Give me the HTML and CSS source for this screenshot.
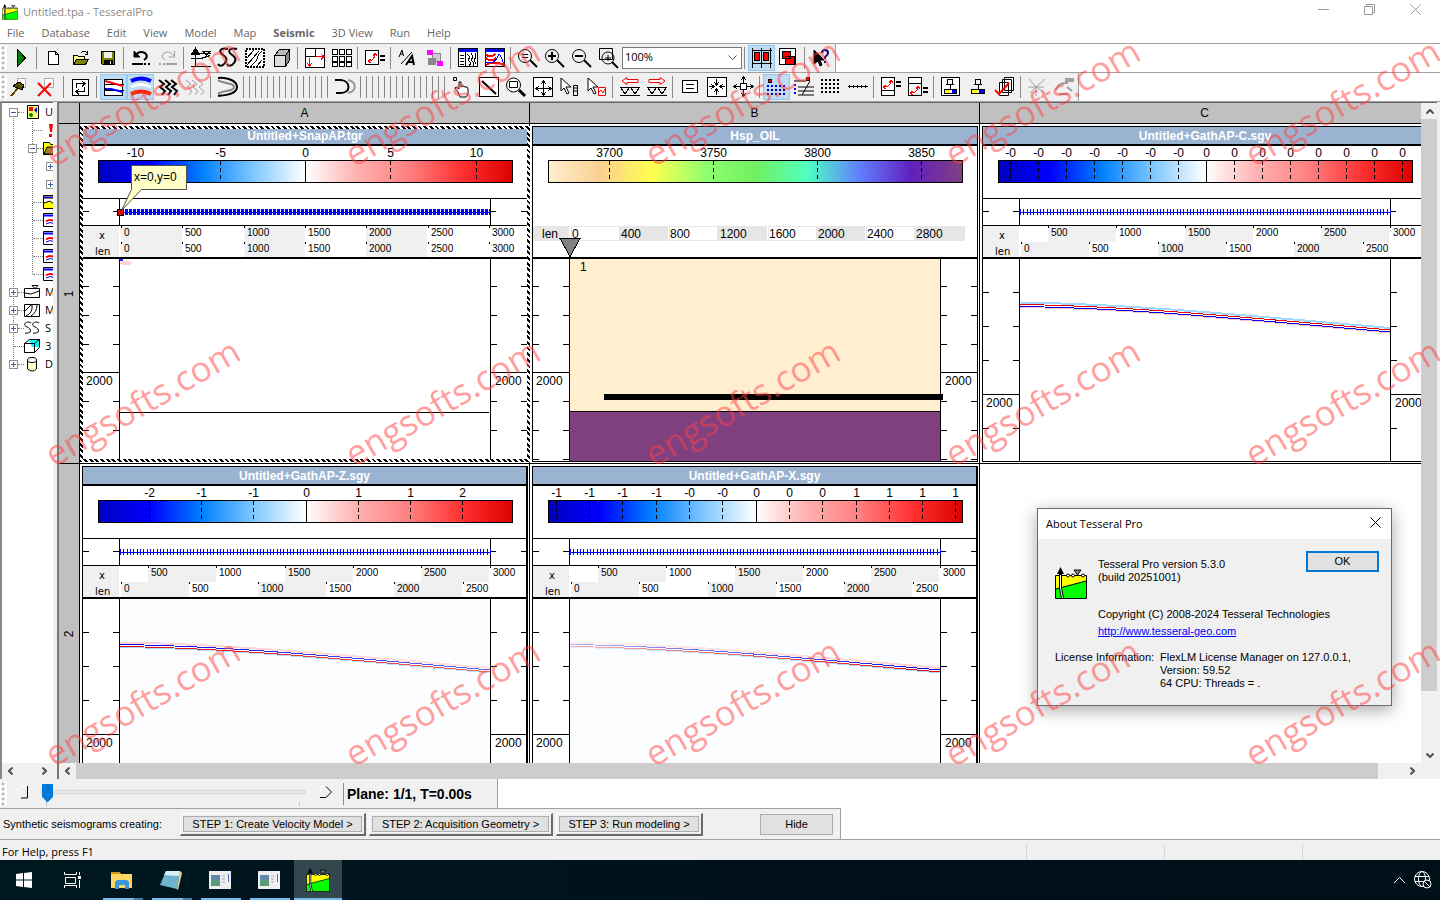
FILE: index.html
```html
<!DOCTYPE html>
<html lang="en">
<head>
    <meta charset="UTF-8">
    <meta name="viewport" content="width=device-width, initial-scale=1.0">
    <title>Untitled.tpa - TesseralPro</title>
    <link rel="stylesheet" href="styles.css">
</head>
<body>
<svg class="defs" width="0" height="0">
    <symbol id="logo" viewBox="0 0 32 32">
        <path d="M1 9h30v22H1z" fill="#ff0"/>
        <path d="M1 22L31 14v17H1z" fill="#0f0"/>
        <path d="M.5 8.500h31v23H.5zM1 22L31 14" fill="none" stroke="#000"/>
        <path d="M5.500 7v14l2 10" fill="none" stroke="#000" stroke-width="3"/>
        <path d="M5.500 8v13l2 10" fill="none" stroke="#fff"/>
        <path d="M5.500 0l3.500 7H2z" fill="#000"/>
        <path d="M19 3h7l-3.500 5z" fill="#888" stroke="#000"/>
        <g fill="#fff" stroke="#000"><circle cx="13" cy="8.500" r="1.500"/><circle cx="18" cy="8.500" r="1.500"/><circle cx="28" cy="8.500" r="1.500"/></g>
    </symbol>
    <symbol id="win" viewBox="0 0 16 16">
        <path d="M.5 1.500h15v13H.5z" fill="#fff" stroke="#000"/>
        <path d="M1 3.500h14" stroke="#00f" stroke-width="2"/>
        <path d="M3 9.500q4-3 9 0" fill="none" stroke="#f00" stroke-width="2"/>
        <path d="M3 12q4-3 9 0" fill="none" stroke="#00f"/>
    </symbol>
</svg>

<div class="app">
    <header class="titlebar">
        <svg class="logo" width="16" height="16"><use href="#logo"/></svg>
        <h1>Untitled.tpa - TesseralPro</h1>
        <button class="winbtn" aria-label="Minimize"><svg width="11" height="11"><path d="M0 5.500h11"/></svg></button>
        <button class="winbtn" aria-label="Restore"><svg width="11" height="11"><path d="M.5 2.500h8v8h-8zM2.500 2.500v-2h8v8h-2"/></svg></button>
        <button class="winbtn" aria-label="Close"><svg width="11" height="11"><path d="M.5 .5l10 10M10.500 .5l-10 10"/></svg></button>
    </header>

    <nav class="menu">
        <button>File</button><button>Database</button><button>Edit</button><button>View</button><button>Model</button><button>Map</button><button class="bold">Seismic</button><button>3D View</button><button>Run</button><button>Help</button>
    </nav>

    <div class="toolrow">
        <div class="toolbar">
            <i class="grip"></i>
            <button class="tb" aria-label="Run"><svg><path d="M6.500 1.500l8 8.500-8 8.500z" fill="#008000"/></svg></button>
            <i class="sep"></i>
            <button class="tb" aria-label="New"><svg><path d="M4.500 3.500h7l3 3v10h-10zM11.500 3.500v3h3" fill="#fff"/></svg></button>
            <button class="tb" aria-label="Open"><svg><path d="M2.500 16V7.500h4l1 1h6v3" fill="#ff8"/><path d="M2.500 16.500l3-5h12l-3 5z" fill="#808000"/><path d="M10 5q3-3 6 0M16.500 3v3h-3"/></svg></button>
            <button class="tb" aria-label="Save"><svg><path d="M3.500 3.500h13v13h-12l-1-1z" fill="#808000"/><path d="M6 4h8v6H6z" fill="#f0f0f0" stroke="none"/><path d="M6 12h8v4H6z" fill="#000"/><path d="M12.500 13v3" stroke="#fff"/></svg></button>
            <i class="sep"></i>
            <button class="tb" aria-label="Undo"><svg class="aa"><path d="M4 8q4-6 10-3 4 4-1 7" stroke-width="2"/><path d="M3 3v6h6z" fill="#000"/><path d="M1 16h11M13 16h2M17 16h2" stroke-width="2"/></svg></button>
            <button class="tb" aria-label="Redo"><svg class="aa dim"><path d="M16 8q-4-6-10-3-4 4 1 7M16.500 3v6h-6"/><path d="M1 16h2M5 16h2M8 16h11" stroke-width="2"/></svg></button>
            <i class="sep"></i>
            <button class="tb" aria-label="Velocity model"><svg><path d="M0 5.500h20M4.500 2v17M0 10.500h10l9-3M0 18.500h20M12 3.500h7l-3.500 3.500z"/><path d="M1 6l3.500-6L8 6z" fill="#000"/></svg></button>
            <button class="tb" aria-label="Seismograms"><svg class="aa"><path d="M10 1C3-1 0 3 4 6s6 5 3 9-6 3-7 1M19 1c-7-2-10 2-6 5s6 5 3 9-6 3-7 1" stroke-width="2"/></svg></button>
            <button class="tb" aria-label="Section"><svg><path d="M1 1h18v18H1z" stroke-width="2" stroke-dasharray="2 1" fill="#fff"/><path d="M2 10l7-8M2 17L14 3M6 18l5-5 3-7 3-3M12 18l5-6"/></svg></button>
            <button class="tb" aria-label="3D model"><svg><path d="M2.500 7.500h11v11h-11z" fill="#ddd"/><path d="M2.500 7.500l5-6h10l-4 6z" fill="#bbb"/><path d="M13.500 7.500l4-6v11l-4 6z" fill="#888"/></svg></button>
            <i class="sep"></i>
            <button class="tb" aria-label="Arrange"><svg><path d="M.5 .5h19v19H.5zM1 8.500h10M10.500 1v8" fill="#fff"/><path d="M11 8.500h8M16 6l3 2.500-3 3M4.500 10v8M2 15l2.500 3L7 15" stroke="#f00"/></svg></button>
            <button class="tb" aria-label="Tiles"><svg><path d="M.5 1.500h5v5h-5zM7.500 1.500h5v5h-5zM14.500 1.500h5v5h-5zM.5 8h5v5h-5zM7.500 8h5v5h-5zM14.500 8h5v5h-5zM.5 14.500h5v4h-5zM7.500 14.500h5v4h-5zM14.500 14.500h5v4h-5z" fill="#fff"/></svg></button>
            <i class="sep"></i>
            <button class="tb" aria-label="Sync"><svg><path d="M0.500 2.500h13v14H.5z" fill="#fff"/><path d="M4 13q5 0 6-7M8 8l2-3 2 3M6 11l-3 2 3 2" stroke="#f00"/><path d="M15 8h5M15 12h5" stroke-width="2"/></svg></button>
            <i class="sep"></i>
            <button class="tb" aria-label="Fonts"><svg class="aa"><path d="M1 9l3-7 1.500 6M2 6h3M3 16L14 4"/><path d="M8 17l6-9 2 9M10 14h6" stroke-width="2"/></svg></button>
            <button class="tb" aria-label="Palette"><svg><path d="M7.500 5.500h8v8h-8z" fill="#ccc" stroke="#888"/><path d="M3 10h8v7H3z" fill="#888" stroke="none"/><path d="M2 2h6v5H2zM12 13h6v5h-6z" fill="#f0f" stroke="none"/></svg></button>
            <i class="sep"></i>
            <button class="tb" aria-label="Window"><svg><path d="M.5 .5h19v18H.5z" fill="#fff"/><path d="M1 2h18" stroke="#00f" stroke-width="3"/><path d="M7.500 4v15M2 7h4M2 10h4M2 13h4M2 16h4M9 6l3 3-2 3 3 3-2 3M13 5l2 4-2 3 3 3-1 3M17 5l1 4-2 3 2 4"/></svg></button>
            <button class="tb" aria-label="Curves"><svg><path d="M.5 .5h19v18H.5z" fill="#fff"/><path d="M1 2h18" stroke="#00f" stroke-width="3"/><path d="M1 6q4 5 9 0M1 10q5 5 10 0M1 17q7-5 18 0" stroke="#f00" stroke-width="2"/><path d="M1 14q8 3 12-6 2-5 6 9" stroke="#00f"/></svg></button>
            <i class="sep"></i>
            <button class="tb" aria-label="Zoom reset"><svg class="aa"><circle cx="7" cy="8" r="6.500"/><path d="M4 6.500h6M4 9.500h6"/><path d="M12 12l7 7" stroke-width="2"/></svg></button>
            <button class="tb" aria-label="Zoom in"><svg class="aa"><circle cx="7" cy="8" r="6.500"/><path d="M3 8h8M7 4v8" stroke-width="2"/><path d="M12 12l7 7" stroke-width="2"/></svg></button>
            <button class="tb" aria-label="Zoom out"><svg class="aa"><circle cx="7" cy="8" r="6.500"/><path d="M3 8h8M12 12l7 7" stroke-width="2"/></svg></button>
            <button class="tb" aria-label="Zoom area"><svg class="aa"><path d="M.5 .5h13v11H.5z"/><circle cx="9" cy="10" r="6"/><path d="M6 10h6M9 7v6"/><path d="M13 14l6 6" stroke-width="2"/></svg></button>
            <label class="combo" aria-label="Zoom"><select><option>100%</option></select><svg width="9" height="6"><path d="M.5 .5l4 4 4-4"/></svg></label>
            <i class="sep"></i>
            <button class="tb on" aria-label="Split"><svg><path d="M9.500 0v20M.5 0v20M0 2.500h20M0 15.500h20M18.500 0v20"/><path d="M2.500 4.500h5v8h-5zM11.500 4.500h5v8h-5z" fill="#f00"/></svg></button>
            <button class="tb" aria-label="Cascade"><svg><path d="M.5 .5h16v16H.5z" fill="#fff"/><path d="M3.500 3.500h8v7h-8zM6.500 8.500h9v8h-9z" fill="#f00"/></svg></button>
            <i class="sep"></i>
            <button class="tb" aria-label="Help pointer"><svg class="aa"><path d="M2 2v14l4-3 2 5 2-1-2-5h4z" fill="#000"/><path d="M10 5q0-3 3-3t3 3q0 2-3 4v2M13 13v2" stroke="#000080" stroke-width="2"/></svg></button>
        </div>
    </div>

    <div class="toolrow">
        <div class="toolbar">
            <i class="grip"></i>
            <button class="tb" aria-label="Build"><svg><path d="M6.500 1.500h8v9h-8z" stroke="#aaa" fill="#fff"/><path d="M0 19l8-9" stroke="#640" stroke-width="2"/><path d="M2 9l6-4 5 3-2 5z" fill="#550"/></svg></button>
            <button class="tb" aria-label="Delete"><svg class="aa"><path d="M6.500 1.500h9v9h-9z" stroke="#aaa" fill="#fff"/><path d="M0 6l13 13M13 6L0 19" stroke="#f00" stroke-width="2"/></svg></button>
            <i class="sep"></i>
            <button class="tb" aria-label="Refresh"><svg><path d="M1.500 2.500h16v16h-16z" fill="#fff"/><path d="M5.500 11V6.500h8M11 4l3 2.500-3 3M13.500 10v4.500h-8M8 12l-3 2.500 3 3"/></svg></button>
            <i class="sep"></i>
            <button class="tb on" aria-label="Layers"><svg><path d="M.5 2.500h18v16H.5z" fill="#fff"/><path d="M0 7.500h20M0 13.500h20"/><path class="aa" d="M1 4l18 5" stroke="#f00" stroke-width="2"/><path class="aa" d="M1 12h6l12 3" stroke="#00f" stroke-width="2"/></svg></button>
            <button class="tb on" aria-label="Wave field"><svg class="aa"><path d="M0 4q10-5 20 0" stroke="#00f" stroke-width="4"/><path d="M0 10q10-5 20 0" stroke="#fff" stroke-width="3"/><path d="M0 17q10-5 20 0" stroke="#f20" stroke-width="4"/></svg></button>
            <button class="tb" aria-label="Wiggle"><svg class="aa"><path d="M1 3l5 4-4 3 5 4-3 4M7 3l5 4-4 3 5 4-3 4M13 3l5 4-4 3 5 4-3 4" stroke-width="2"/></svg></button>
            <button class="tb" aria-label="Wiggle off"><svg class="aa dim"><path d="M1 3l5 4-4 3 5 4-3 4M7 3l5 4-4 3 5 4-3 4M13 3l5 4-4 3 5 4-3 4"/></svg></button>
            <i class="sep"></i>
            <button class="tb" aria-label="Rays"><svg class="aa"><path d="M0 3c4 4 16 2 16 7S4 13 0 17" stroke="#888" stroke-width="2"/><path d="M0 1c7-1 19 2 19 9S8 18 0 19" stroke-width="2"/></svg></button>
            <div class="seps" data-count="15"></div>
            <button class="tb" aria-label="Reflection"><svg class="aa"><path d="M13 3c9 2 9 11 0 13" stroke="#999" stroke-width="2"/><path d="M0 3h6c10 1 10 13 0 13H1" stroke-width="2"/></svg></button>
            <div class="seps" data-count="15"></div>
            <button class="tb" aria-label="Pan"><svg class="aa"><path d="M1.500 .5h3v3h-3z"/><path d="M6 15l-3-4 1-1 3 2V5h2v5l2-1 2 1h2l1 2v5l-2 3H8z" fill="#fff"/></svg></button>
            <button class="tb" aria-label="Line"><svg><path d="M.5 .5h19v19H.5z" fill="#fff"/><path class="aa" d="M3 4l14 13" stroke-width="2"/></svg></button>
            <button class="tb" aria-label="Zoom window"><svg class="aa"><circle cx="7.500" cy="8" r="7" fill="#fff"/><path d="M3.500 4.500h8v6h-8z"/><path d="M13 13l6 6" stroke-width="3"/></svg></button>
            <button class="tb" aria-label="Fit"><svg><path d="M.5 .5h19v19H.5z" fill="#fff"/><path d="M10.500 5v12M4 11.500h13M8 7l2.500-3L13 7M8 15l2.500 3 2.500-3M6 9l-3 2.500L6 14M15 9l3 2.500-3 2.500"/></svg></button>
            <button class="tb" aria-label="Pick item"><svg class="aa"><path d="M1 1v13l3-3 3 6 2-1-3-6h5z" fill="#fff"/><path d="M13.500 8.500h4v10h-4zM14 11h3M14 14h3"/></svg></button>
            <button class="tb" aria-label="Pick trace"><svg class="aa"><path d="M1 1v13l3-3 3 6 2-1-3-6h5z" fill="#fff"/><path d="M11.500 10.500h7v8h-7z" fill="#fff" stroke="#f00"/><path d="M12 15l2-2 2 3 2-4" stroke="#f00"/></svg></button>
            <i class="sep"></i>
            <button class="tb" aria-label="Shift left"><svg><path class="aa" d="M7 .5L2 4l5 3.500V5.500h11v-3H7z" stroke="#f00" fill="#fff"/><path d="M0 10.500h20M1 11l4 6 4-6M11 11l4 6 4-6M0 18.500h20"/></svg></button>
            <button class="tb" aria-label="Shift right"><svg><path class="aa" d="M13 .5L18 4l-5 3.500V5.500H2v-3h11z" stroke="#f00" fill="#fff"/><path d="M0 10.500h20M1 11l4 6 4-6M11 11l4 6 4-6M0 18.500h20"/></svg></button>
            <i class="sep"></i>
            <button class="tb" aria-label="Equal"><svg><path d="M2.500 3.500h15v12h-15z" fill="#fff"/><path d="M6 7.500h8M6 11.500h8"/></svg></button>
            <button class="tb" aria-label="Shrink"><svg><path d="M.5 .5h19v19H.5z" fill="#fff"/><path d="M9.500 2v6M7 5l2.500 3L12 5M9.500 18v-6M7 15l2.500-3 2.500 3M2 9.500h5M4 7l3 2.500L4 12M18 9.500h-5M16 7l-3 2.500 3 2.500"/></svg></button>
            <button class="tb" aria-label="Grow"><svg><path d="M6.500 6.500h6v6h-6z" fill="#fff"/><path d="M9.500 6V0M7 3l2.500-3L12 3M9.500 13v6M7 16l2.500 3 2.500-3M6 9.500H0M3 7L0 9.500 3 12M13 9.500h6M16 7l3 2.500-3 2.500"/></svg></button>
            <i class="sep"></i>
            <button class="tb on" aria-label="Source grid"><svg><path d="M1.500 2.500h3v3h-3z" fill="#f00"/><path d="M0 9h20" stroke="#00f" stroke-width="2" stroke-dasharray="2 2"/><path d="M0 13h20M0 17h20" stroke="#000080" stroke-width="2" stroke-dasharray="2 2"/></svg></button>
            <button class="tb" aria-label="Source lines"><svg class="aa"><path d="M12.500 .5h3v3h-3z" fill="#f00"/><path d="M0 4h12M4 10h16M4 14h16M4 18h16M8 18l8-14"/><path d="M1 7v12" stroke="#00f" stroke-width="2" stroke-dasharray="2 2"/></svg></button>
            <button class="tb" aria-label="Receiver grid"><svg><path d="M0 3h20M0 7h20M0 11h20M0 15h20" stroke-width="2" stroke-dasharray="2 2"/></svg></button>
            <button class="tb" aria-label="Receiver line"><svg><path d="M0 9.500h20"/><path d="M1 9.500h19" stroke-width="3" stroke-dasharray="1 3"/></svg></button>
            <i class="sep"></i>
            <button class="tb" aria-label="Match top"><svg><path d="M.5 .5h13v18H.5zM0 13.500h14" fill="#fff"/><path d="M3 10q6 0 7-6M8 6l2-3 2 3M5 8l-3 2 3 2" stroke="#f00"/><path d="M15 5h5M15 9h5" stroke-width="2"/></svg></button>
            <button class="tb" aria-label="Match bottom"><svg><path d="M.5 .5h13v18H.5zM0 6.500h14" fill="#fff"/><path d="M3 16q6 0 7-6M8 12l2-3 2 3M5 14l-3 2 3 2" stroke="#f00"/><path d="M15 11h5M15 15h5" stroke-width="2"/></svg></button>
            <i class="sep"></i>
            <button class="tb" aria-label="Pin colours"><svg><path d="M.5 .5h18v18H.5z" fill="#fff"/><path d="M6.500 2.500h5v5h-5zM5 7.500h8M9 8v4M3.500 12.500h12v4h-12z"/><path d="M4 13h5v3H4z" fill="#ff0" stroke="none"/><path d="M11 13h4v3h-4z" fill="#00f" stroke="none"/></svg></button>
            <button class="tb" aria-label="Pin scale"><svg><path d="M7.500 2.500h5v5h-5zM6 7.500h8M10 8v4M3.500 12.500h13v4h-13z"/><path d="M4 13h5v3H4z" fill="#ff0" stroke="none"/><path d="M11 13h5v3h-5z" fill="#00f" stroke="none"/></svg></button>
            <button class="tb" aria-label="Apply to all"><svg class="aa"><path d="M9.500 .5h9v13h-9zM7.500 2.500h9v13h-9zM4.500 5.500h9v13h-9z" fill="#fff"/><path d="M0 13l4 4L14 6" stroke="#f00" stroke-width="2"/></svg></button>
            <i class="sep"></i>
            <button class="tb" aria-label="Cut rays"><svg class="aa dim"><path d="M1 2l7 8 9-8M8 10v9M8 10l-6 6M8 10l9 6M0 10h16"/></svg></button>
            <button class="tb" aria-label="Arc"><svg class="aa dim"><path d="M1 13q2-8 12-7M10 2h9M10 4h9M4 17h9M12 10l5 4" stroke-width="2"/></svg></button>
        </div>
    </div>

    <main class="work">
        <aside class="tree">
            <ul>
                <li><i class="tog open"></i><svg class="ti"><path d="M3.500 1.500h11v13h-11z" fill="#ff6" stroke="#000"/><path d="M5 3h4v4H5z" fill="#f00"/><circle cx="7" cy="11" r="2" fill="#008000"/><path d="M10 6l3-3v6z" fill="#00f"/></svg>U</li>
                <li class="d1"><i class="tog none"></i><svg class="ti"><path d="M6 2h4l-1 8H7zM6 12h3v3H6z" fill="#f00"/></svg></li>
                <li class="d1"><i class="tog open"></i><svg class="ti"><path d="M.5 14.500v-12h6l1 2h8v10z" fill="#ff0" stroke="#000"/><path d="M1 14l3-7h12v7z" fill="#a08030" stroke="#000"/></svg></li>
                <li class="d2"><i class="tog"></i></li>
                <li class="d2"><i class="tog"></i></li>
                <li class="d1"><i class="tog none"></i><svg class="ti"><path d="M.5 1.500h15v13H.5z" fill="#ff0" stroke="#000"/><path d="M1 3.500h14" stroke="#00f" stroke-width="2"/><path d="M1 5h14v3H1z" fill="#fff"/><path d="M1 9l6-2 5 4" fill="none" stroke="#000"/></svg></li>
                <li class="d1"><i class="tog none"></i><svg class="ti"><use href="#win"/></svg></li>
                <li class="d1"><i class="tog none"></i><svg class="ti"><use href="#win"/></svg></li>
                <li class="d1"><i class="tog none"></i><svg class="ti"><use href="#win"/></svg></li>
                <li class="d1"><i class="tog none"></i><svg class="ti"><use href="#win"/></svg></li>
                <li><i class="tog"></i><svg class="ti"><path d="M.5 4.500h15v9H.5zM1 9l6 1 8-3M8 1.500h6l-3 3z" fill="#fff" stroke="#000"/></svg>M</li>
                <li><i class="tog"></i><svg class="ti"><path d="M.5 2.500h15v12H.5z" fill="#fff" stroke="#000"/><path d="M1 9l6-6M2 14q7-3 6-11M7 14q6-4 6-11" fill="none" stroke="#000"/></svg>M</li>
                <li><i class="tog"></i><svg class="ti"><path d="M7 3C2 0-2 5 3 7s5 7-2 6M15 3c-5-3-9 2-4 4s5 7-2 6" fill="none" stroke="#000"/></svg>S</li>
                <li><i class="tog none"></i><svg class="ti"><path d="M5 2h10v7H8z" fill="#0ff"/><path d="M.5 5.500h10v9H.5zM.5 5.500l5-4h10v8l-5 5M10.500 5.500l5-4" fill="none" stroke="#000"/></svg>3</li>
                <li><i class="tog"></i><svg class="ti"><path d="M3.500 4v9q5 4 9 0V4" fill="#ffc" stroke="#000"/><ellipse cx="8" cy="4" rx="4.500" ry="2.500" fill="#fff" stroke="#000"/></svg>D</li>
            </ul>
            <div class="hbar"><button aria-label="Left"><svg width="5" height="8"><path d="M4.500 .5l-3.500 3.500 3.500 3.500"/></svg></button><button aria-label="Right"><svg width="5" height="8"><path d="M.5 .5l3.500 3.500-3.500 3.500"/></svg></button></div>
        </aside>

        <section class="doc">
            <div class="sheet">
                <div class="head"></div><div class="head">A</div><div class="head">B</div><div class="head">C</div>
                <div class="head side"><span>1</span></div>
                <div class="cell"><article class="panel selected" data-panel="snap"></article></div>
                <div class="cell"><article class="panel" data-panel="oil"></article></div>
                <div class="cell"><article class="panel" data-panel="c"></article></div>
                <div class="head side"><span>2</span></div>
                <div class="cell"><article class="panel heavy" data-panel="z"></article></div>
                <div class="cell"><article class="panel heavy" data-panel="x"></article></div>
            </div>
            <div class="vbar"><button aria-label="Up"><svg width="8" height="5"><path d="M.5 4.500l3.500-3.500 3.500 3.500"/></svg></button><i class="thumb"></i><button aria-label="Down"><svg width="8" height="5"><path d="M.5 .5l3.500 3.500 3.500-3.500"/></svg></button></div>
            <div class="hbar"><button aria-label="Left"><svg width="5" height="8"><path d="M4.500 .5l-3.500 3.500 3.500 3.500"/></svg></button><i class="thumb"></i><button aria-label="Right"><svg width="5" height="8"><path d="M.5 .5l3.500 3.500-3.500 3.500"/></svg></button></div>
        </section>
    </main>

    <div class="plane">
        <i class="grip"></i>
        <button class="step" aria-label="Previous plane"><svg width="14" height="14"><path d="M12 1.500H6L.5 7 6 12.500h6" stroke="#fff"/><path d="M12.500 1v12H6" stroke="#000"/></svg></button>
        <input type="range" min="0" max="10" value="0" aria-label="Plane">
        <button class="step" aria-label="Next plane"><svg width="14" height="14"><path d="M1 12V1.500h6" stroke="#fff"/><path d="M7 1.500L12.500 7 7 12.500H1" stroke="#000"/></svg></button>
        <output>Plane: 1/1, T=0.00s</output>
    </div>

    <div class="steps">
        <span>Synthetic seismograms creating:</span>
        <button class="raised s1"><b>STEP 1: Create Velocity Model &gt;</b></button>
        <button class="raised s2"><b>STEP 2: Acquisition Geometry &gt;</b></button>
        <button class="raised s3"><b>STEP 3: Run modeling &gt;</b></button>
        <button class="hide">Hide</button>
    </div>

    <footer class="status"><span>For Help, press F1</span><i></i><i></i><i></i></footer>

    <nav class="taskbar">
        <button aria-label="Start"><svg width="16" height="16"><path d="M0 2l7-1v6.500H0zM8 1l8-1v7.500H8zM0 8.500h7V15l-7-1zM8 8.500h8V16l-8-1z" fill="#fff"/></svg></button>
        <button aria-label="Task view"><svg width="18" height="16"><path d="M1.500 5.500h10v6h-10zM.5 0v2.500h12V0M.5 16v-2.500h12V16M15.500 0v3M15.500 8v8" fill="none" stroke="#fff"/><path d="M14 4h3v3h-3z" fill="#fff"/></svg></button>
        <button class="run more" aria-label="File Explorer"><svg width="22" height="18"><path d="M0 1h8l2 2h11v14H0z" fill="#fdd663"/><path d="M0 1h8l2 2H0z" fill="#d99a1c"/><path d="M4 18v-7l2-2h10l2 2v7h-4v-4H8v4z" fill="#3b97dd"/></svg></button>
        <button class="run more" aria-label="Notepad"><svg width="22" height="20"><path d="M6 1l14 0-3 18L0 15z" fill="#6fb4cc"/><path d="M6 1l14 0-1 5L4 5z" fill="#d6f0f5"/><path d="M20 1l2 2-4 17-1-1z" fill="#e8d9a8"/></svg></button>
        <button class="run" aria-label="Application"><svg width="22" height="18"><path d="M0 0h22v18H0z" fill="#eee"/><path d="M2 4h9v11H2z" fill="#5a9a7a"/><path d="M2 4h9v5H2z" fill="#5f88a8"/><path d="M13 5h3M13 8h3M13 11h3" stroke="#aaa"/><path d="M19 3h1v8h-1z" fill="#4a70c0"/></svg></button>
        <button class="run" aria-label="Application"><svg width="22" height="18"><path d="M0 0h22v18H0z" fill="#eee"/><path d="M2 4h9v11H2z" fill="#5a9a7a"/><path d="M2 4h9v5H2z" fill="#5f88a8"/><path d="M13 5h3M13 8h3M13 11h3" stroke="#aaa"/><path d="M19 3h1v8h-1z" fill="#4a70c0"/></svg></button>
        <button class="run active" aria-label="TesseralPro"><svg width="24" height="24"><use href="#logo"/></svg></button>
        <div class="tray">
            <button aria-label="Hidden icons"><svg width="13" height="8"><path d="M1 7l5.500-5.500L12 7" fill="none" stroke="#fff"/></svg></button>
            <button aria-label="Network"><svg width="18" height="18"><g fill="none" stroke="#fff"><circle cx="8" cy="8" r="7.500"/><ellipse cx="8" cy="8" rx="3.500" ry="7.500"/><path d="M1 5.500h14M1 10.500h14"/></g><circle cx="13" cy="13" r="4" fill="#001018" stroke="#fff"/><path d="M10 10l6 6" stroke="#fff"/></svg></button>
        </div>
    </nav>

    <div class="about" role="dialog" aria-labelledby="about-title">
        <header><h2 id="about-title">About Tesseral Pro</h2><button aria-label="Close"><svg width="11" height="11"><path d="M.5 .5l10 10M10.500 .5l-10 10" stroke="#000"/></svg></button></header>
        <div class="about-body">
            <svg class="logo" width="32" height="32"><use href="#logo"/></svg>
            <p>Tesseral Pro version 5.3.0<br>(build 20251001)</p>
            <button class="ok">OK</button>
            <div class="copy">Copyright (C) 2008-2024 Tesseral Technologies<a href="#">http://www.tesseral-geo.com</a></div>
        </div>
        <dl><dt>License Information:</dt><dd>FlexLM License Manager on 127.0.0.1,<br>Version: 59.52<br>64 CPU: Threads = .</dd></dl>
    </div>

    <div class="marks"></div>
</div>
<script src="panels.js"></script>
</body>
</html>
```
FILE: styles.css
```css
* {
    box-sizing: border-box;
}
body {
    margin: 0;
    font: 12px/16px "Open Sans", "Noto Sans", sans-serif;
    color: #000;
    background: #fff;
}
button {
    padding: 0;
    border: 0;
    background: none;
    font: inherit;
    color: inherit;
}
h1, h2, p, ul, dl, dd {
    margin: 0;
    padding: 0;
    font-size: inherit;
    font-weight: normal;
}
.defs {
    position: absolute;
}
.app {
    position: relative;
    display: flex;
    flex-direction: column;
    height: 100vh;
    padding: 0 1px 1px 0;
    overflow: hidden;
}

/* title and menu */
.titlebar {
    display: flex;
    align-items: center;
    height: 23px;
    padding-left: 2px;
    color: #888;
}
.titlebar h1 {
    flex: 1;
    padding-left: 5px;
    font-size: 11px;
}
.winbtn {
    width: 46px;
    height: 22px;
    align-self: flex-start;
}
.winbtn svg {
    fill: none;
    stroke: #999;
}
.winbtn:last-child {
    margin-right: 2px;
}
.menu {
    display: flex;
    gap: 17px;
    height: 21px;
    padding: 0 7px 1px;
    border-bottom: 1px solid #a0a0a0;
    font-size: 11px;
    color: #666;
}
.menu .bold {
    font-weight: bold;
}

/* toolbars */
.toolrow {
    display: flex;
    height: 29px;
    border-bottom: 1px solid #a0a0a0;
}
.toolbar {
    display: flex;
    align-items: center;
    background: #f0f0f0;
    border-right: 1px solid #a0a0a0;
}
.grip {
    width: 7px;
    height: 24px;
    background: #fff radial-gradient(circle at 3px 2px, #bbb 1px, transparent 2px) 0 0 / 7px 5px;
}
.tb {
    display: flex;
    align-items: center;
    justify-content: center;
    width: 27px;
    height: 26px;
}
.tb svg {
    width: 20px;
    height: 20px;
    overflow: visible;
    fill: none;
    stroke: #000;
    shape-rendering: crispEdges;
}
.tb .aa {
    shape-rendering: auto;
}
.tb .dim {
    stroke: #a0a0a0;
}
.tb.on {
    background: #c0dcf3;
    border: 1px solid #90c8f6;
}
.sep {
    width: 6px;
    height: 22px;
    background: linear-gradient(#888, #888) 2px 0 / 1px 100% no-repeat;
}
.seps {
    display: flex;
}
.combo {
    position: relative;
}
.combo select {
    display: block;
    width: 120px;
    height: 22px;
    padding: 0 2px 3px;
    border: 1px solid #7a7a7a;
    background: #fff;
    appearance: none;
    font: 11px "Open Sans", "Noto Sans", sans-serif;
}
.combo svg {
    position: absolute;
    right: 5px;
    top: 8px;
    fill: none;
    stroke: #555;
}

/* work area */
.work {
    flex: 1;
    display: flex;
    gap: 4px;
    min-height: 0;
    padding-right: 3px;
    background: #f0f0f0;
}
.tree {
    display: flex;
    flex-direction: column;
    width: 53px;
    border-left: 2px solid #888;
    border-top: 1px solid #666;
    overflow: hidden;
}
.tree ul {
    flex: 1;
    list-style: none;
    background:
        repeating-linear-gradient(#808080 0 1px, #fff 1px 2px) 11px 9px / 1px 252px no-repeat,
        repeating-linear-gradient(#808080 0 1px, #fff 1px 2px) 30px 18px / 1px 153px no-repeat,
        #fff;
}
.tree li {
    display: flex;
    align-items: center;
    height: 18px;
    padding-left: 7px;
    font-size: 11px;
    white-space: nowrap;
}
.tree .d1 {
    padding-left: 26px;
}
.tree .d2 {
    padding-left: 44px;
}
.tog {
    position: relative;
    flex: none;
    width: 9px;
    height: 9px;
    margin-right: 6px;
    border: 1px solid #919191;
    background:
        linear-gradient(#4060a0, #4060a0) 1px 3px / 5px 1px no-repeat,
        linear-gradient(#4060a0, #4060a0) 3px 1px / 1px 5px no-repeat,
        #fff;
}
.tog.open {
    background: linear-gradient(#4060a0, #4060a0) 1px 3px / 5px 1px no-repeat, #fff;
}
.tog.none {
    border-color: transparent;
    background: none;
}
.tog::after {
    content: "";
    position: absolute;
    left: 8px;
    top: 3px;
    width: 6px;
    border-top: 1px dotted #808080;
}
.tog.none::after {
    left: 4px;
    width: 10px;
}
.ti {
    flex: none;
    width: 16px;
    height: 16px;
    margin-right: 5px;
}
.doc {
    flex: 1;
    min-width: 0;
    display: grid;
    grid-template-columns: 1fr 16px;
    grid-template-rows: 1fr 16px;
    border-left: 2px solid #777;
    border-top: 1px solid #666;
}
.sheet {
    display: grid;
    grid-template-columns: 21px repeat(3, 450px);
    grid-template-rows: 21px repeat(2, 340px);
    min-width: 0;
    min-height: 0;
    overflow: hidden;
    background: #fff;
}
.head {
    display: flex;
    align-items: center;
    justify-content: center;
    background: #c0c0c0;
    border: solid #000;
    border-width: 0 1px 1px 0;
    font: 12px/18px "Liberation Sans", Arial, sans-serif;
}
.side span {
    transform: rotate(-90deg);
}
.cell {
    padding: 2px 1px 1px 2px;
    border: solid #000;
    border-width: 0 1px 1px 0;
}
.panel {
    position: relative;
    height: 336px;
    border: 1px solid #000;
}
.panel.heavy {
    border-right-width: 2px;
}
.panel.selected::after {
    content: "";
    position: absolute;
    inset: -1px -3px;
    border: 3px solid transparent;
    border-image: repeating-linear-gradient(45deg, #000 0 2px, #fff 2px 4px) 3;
}
.panel h3 {
    height: 19px;
    margin: 0;
    border-bottom: 2px solid #000;
    background: #9ab3d1;
    color: #fff;
    font: bold 12px/18px "Liberation Sans", Arial, sans-serif;
    text-align: center;
}
.panel svg {
    display: block;
    width: 444px;
    height: 315px;
    font: 12px "Liberation Sans", Arial, sans-serif;
    shape-rendering: crispEdges;
}
.panel .small {
    font-size: 10px;
}
.panel .unit {
    font: 10px "DejaVu Sans", Verdana, sans-serif;
}
.panel .smooth {
    shape-rendering: auto;
}

/* scroll bars */
.hbar, .vbar {
    display: flex;
    background: #f0f0f0;
}
.hbar button, .vbar button {
    display: flex;
    align-items: center;
    justify-content: center;
    flex: none;
    width: 17px;
    height: 16px;
}
.hbar svg, .vbar svg {
    fill: none;
    stroke: #505050;
    stroke-width: 2;
}
.vbar {
    flex-direction: column;
}
.vbar .thumb {
    flex: 0 1 572px;
    margin-bottom: auto;
}
.thumb {
    background: #cdcdcd;
}
.doc .hbar .thumb {
    flex: 1;
    margin-right: 26px;
}
.tree .hbar {
    height: 16px;
    justify-content: space-between;
}

/* plane slider */
.plane {
    display: flex;
    align-items: center;
    align-self: flex-start;
    width: 498px;
    height: 29px;
    background: #f0f0f0;
    border-right: 1px solid #a0a0a0;
}
.step {
    width: 30px;
    height: 20px;
}
.step svg {
    fill: none;
}
.plane input {
    appearance: none;
    width: 264px;
    height: 25px;
    margin: 0 6px 0 4px;
    background:
        linear-gradient(#c4c4c4, #c4c4c4) 5px 21px / 1px 4px no-repeat,
        linear-gradient(#c4c4c4, #c4c4c4) 258px 21px / 1px 4px no-repeat;
}
.plane input::-webkit-slider-runnable-track {
    height: 4px;
    margin-bottom: 4px;
    border: 1px solid #d6d6d6;
    background: #e7eaea;
}
.plane input::-webkit-slider-thumb {
    appearance: none;
    width: 11px;
    height: 19px;
    margin-top: -7px;
    background: #0078d7;
    clip-path: polygon(0 0, 100% 0, 100% 70%, 50% 100%, 0 70%);
}
.plane output {
    margin-left: 2px;
    padding-left: 3px;
    border-left: 1px solid #888;
    font: bold 14px/22px "Liberation Sans", Arial, sans-serif;
}

/* step buttons */
.steps {
    display: flex;
    align-items: center;
    align-self: flex-start;
    width: 841px;
    height: 31px;
    padding: 0 7px 0 3px;
    gap: 3px;
    border: solid #a0a0a0;
    border-width: 1px 1px 0 0;
    background: #f0f0f0;
    font: 11px/16px "Liberation Sans", Arial, sans-serif;
}
.steps span {
    width: 174px;
}
.raised {
    height: 23px;
    padding: 2px;
    border: solid;
    border-width: 1px 2px 2px 1px;
    border-color: #fff #696969 #696969 #fff;
}
.raised b {
    display: block;
    border: 1px solid #adadad;
    background: #e1e1e1;
    font-weight: normal;
    line-height: 14px;
}
.s1 {
    width: 186px;
}
.s2 {
    width: 184px;
}
.s3 {
    width: 147px;
}
.hide {
    width: 73px;
    height: 21px;
    margin-left: auto;
    border: 1px solid #adadad;
    background: #e1e1e1;
}

/* status bar and task bar */
.status {
    display: flex;
    height: 21px;
    padding: 4px 0 0 2px;
    border-top: 1px solid #a0a0a0;
    background: #f0f0f0;
    font-size: 11px;
}
.status span {
    flex: 1;
}
.status i {
    width: 138px;
    border-left: 1px solid #d7d7d7;
}
.taskbar {
    display: flex;
    height: 40px;
    background: linear-gradient(90deg, #001820, #00101c 60%, #001018);
}
.taskbar > button {
    width: 48px;
    margin-right: 1px;
}
.taskbar button svg {
    display: block;
    margin: auto;
}
.taskbar .run {
    background: linear-gradient(#76b9ed, #76b9ed) 5px 100% / 40px 2px no-repeat;
}
.taskbar .run.active {
    background: linear-gradient(#76b9ed, #76b9ed) 0 100% / 48px 2px no-repeat, #33474f;
}
.taskbar .more {
    background: linear-gradient(90deg, #76b9ed 31px, #4b7ba0 31px) 5px 100% / 40px 2px no-repeat;
}
.tray {
    display: flex;
    gap: 8px;
    margin-left: auto;
    padding-right: 8px;
}

/* about dialog */
.about {
    position: absolute;
    top: 508px;
    right: 49px;
    width: 355px;
    height: 198px;
    border: 1px solid #6b6b6b;
    background: #f0f0f0;
    box-shadow: 0 4px 16px rgba(0, 0, 0, .35);
    font: 11px/13px "Liberation Sans", Arial, sans-serif;
}
.about header {
    display: flex;
    align-items: center;
    justify-content: space-between;
    height: 30px;
    padding: 0 10px 0 8px;
    background: #fff;
    font: 11px/16px "Open Sans", "Noto Sans", sans-serif;
}
.about-body {
    display: grid;
    grid-template-columns: 43px 1fr 73px;
    padding: 12px 12px 0 17px;
}
.about .logo {
    margin-top: 16px;
}
.about p {
    padding-top: 7px;
}
.ok {
    height: 21px;
    border: 2px solid #0078d7;
    background: #e1e1e1;
}
.copy {
    grid-column: 2 / 4;
    padding-top: 9px;
}
.copy a {
    display: block;
    margin-top: 4px;
    color: #00f;
}
.about dl {
    display: flex;
    padding: 13px 17px;
}
.about dt {
    width: 105px;
}

/* repeated site mark */
.marks {
    position: absolute;
    inset: -48px -60px 0 -8px;
    display: grid;
    grid-template-columns: repeat(5, 300px);
    grid-auto-rows: 300px;
    place-items: center;
    pointer-events: none;
    color: rgba(255, 64, 64, .5);
    font-size: 35px;
    font-weight: 500;
}
.marks span {
    transform: rotate(-30deg);
}
```
FILE: panels.js
```javascript
// separators of the empty toolbar groups
document.querySelectorAll('.seps').forEach(v => {
    v.innerHTML = '<i class="sep"></i>'.repeat(v.dataset.count);
});

document.querySelector('.marks').innerHTML = '<span>engsofts.com</span>'.repeat(15);

const RED_BLUE = ['#0000c0 0', '#0000ff 12.5', '#0080ff 25', '#80c8ff 37.5', '#ffffff 50', '#ffb0b0 62.5', '#ff8080 75', '#ff3030 88', '#dc0000 100'];
const RAINBOW = ['#ffeed0 0', '#fad090 12.5', '#ffff50 25', '#90ff70 38', '#70f060 50', '#50ffc0 62.5', '#6080ff 75', '#6020c0 87.5', '#804080 100'];
const AXIS_X = {start: 148, step: 68.3, from: 500, count: 6};
const AXIS_LEN = {start: 121, step: 68.3, from: 0, count: 6};
const AXIS_SNAP = {start: 121, step: 61.3, from: 0, count: 7};

const panels = {
    snap: {
        title: 'Untitled+SnapAP.tgr', colors: RED_BLUE, labels: ['-10', '-5', '0', '5', '10'], first: 135, step: 85.3,
        x: AXIS_SNAP, len: AXIS_SNAP, ticks: [286, 315, 344, 401, 430, 459], major: 372, thick: true
    },
    oil: {
        title: 'Hsp_OIL', colors: RAINBOW, labels: ['3700', '3750', '3800', '3850'], first: 159, step: 104,
        ticks: [286, 315, 344, 401, 430, 459], major: 372
    },
    c: {
        title: 'Untitled+GathAP-C.sgy', colors: RED_BLUE, labels: '-0 -0 -0 -0 -0 -0 -0 0 0 0 0 0 0 0 0'.split(' '), first: 110, step: 28,
        x: AXIS_X, len: AXIS_LEN, ticks: [292, 326, 360, 428], major: 394,
        wave: ['#a0d8ff', '#f00000', '#0000f0', '#ffc8c8'], fade: [1, 1]
    },
    z: {
        title: 'Untitled+GathAP-Z.sgy', colors: RED_BLUE, labels: ['-2', '-1', '-1', '0', '1', '1', '2'], first: 149.5, step: 52.2,
        x: AXIS_X, len: AXIS_LEN, ticks: [292, 326, 360, 428], major: 394, tint: true,
        wave: ['#ffd0d0', '#0000f0', '#f00000', '#a0d8ff'], fade: [1, .6]
    },
    x: {
        title: 'Untitled+GathAP-X.sgy', colors: RED_BLUE, labels: '-1 -1 -1 -1 -0 -0 0 0 0 1 1 1 1'.split(' '), first: 106.3, step: 33.3,
        x: AXIS_X, len: AXIS_LEN, ticks: [292, 326, 360, 428], major: 394, tint: true,
        wave: ['#ffd0d0', '#0000f0', '#f00000', '#a0d8ff'], fade: [.3, 1]
    }
};

const rect = (x, y, w, h, fill) => `<rect x="${x}" y="${y}" width="${w}" height="${h}" fill="${fill}"/>`;
const text = (x, y, s, cls = '') => `<text x="${x}" y="${y}" class="${cls}">${s}</text>`;

function colorBar(p, id) {
    let stops = p.colors.map(c => {
        let [color, at] = c.split(' ');
        return `<stop offset="${at}%" stop-color="${color}"/>`;
    }).join('');
    let out = `<linearGradient id="bar-${id}">${stops}</linearGradient>`;
    out += `<rect x="98.500" y="160.500" width="414" height="22" fill="url(#bar-${id})" stroke="#000"/>`;
    p.labels.forEach((s, k) => {
        let x = Math.floor(p.first + k * p.step) + .5;
        let solid = s == '0' && Math.abs(x - 306) < 3;
        out += `<path d="M${x} 161v22" stroke="#000" ${solid ? '' : 'stroke-dasharray="4 3"'}/>`;
        out += `<text x="${x}" y="157" text-anchor="middle">${s}</text>`;
    });
    return out;
}

function axis(a, y) {
    let out = '';
    for (let k = 0; k < a.count; k++) {
        let x = Math.round(a.start + k * a.step);
        if (k % 2 == 0 && x < 480) out += rect(x, y, Math.round(a.step), 16, '#f0f0f0');
        out += rect(x, y, 1, 2, '#000') + text(x + 3, y + 10, a.from + k * 500, 'small');
    }
    return out;
}

// receiver line with both distance scales
function geometry(p) {
    let out = rect(83, 226, 36, 31, '#f0f0f0');
    out += axis(p.x, 226) + axis(p.len, 242);
    out += text(99, 239, 'x', 'unit') + text(95, 255, 'len', 'unit');
    out += '<path d="M83 198.500h444M83 225.500h444M119.500 198v28M490.500 198v28M83 211.500h6M113 211.500h6M491 211.500h5M521 211.500h6" stroke="#000"/>';
    out += rect(120, 212, 371, 1, '#00f');
    out += p.thick
        ? '<path d="M121 212h369" stroke="#00f" stroke-width="6" stroke-dasharray="3 1"/>'
        : '<path d="M120 212h371" stroke="#00f" stroke-width="6" stroke-dasharray="1 2 1 3 1 2"/>';
    return out;
}

function depthScale(p) {
    let out = '<path d="M119.500 259v203M490.500 259v203" stroke="#000"/>';
    p.ticks.forEach(y => {
        out += `<path d="M83 ${y}.5h6M113 ${y}.5h6M491 ${y}.5h6M521 ${y}.5h6" stroke="#000"/>`;
    });
    out += `<path d="M83 ${p.major}.5h36M491 ${p.major}.5h36" stroke="#000"/>`;
    out += text(86, p.major + 13, '2000') + text(495, p.major + 13, '2000');
    return out;
}

function wave(p, id) {
    let out = `<linearGradient id="fade-${id}"><stop offset="0" stop-color="#fff" stop-opacity="${p.fade[0]}"/><stop offset="1" stop-color="#fff" stop-opacity="${p.fade[1]}"/></linearGradient>`;
    out += `<mask id="m-${id}" maskUnits="userSpaceOnUse" x="120" y="259" width="370" height="200"><rect x="120" y="259" width="370" height="200" fill="url(#fade-${id})"/></mask>`;
    let lines = p.wave.map((c, k) => {
        let y = [-2, 0, 2, 3][k];
        return `<path d="M120 ${304.5 + y}C230 ${306 + y} 340 ${317 + y} 490 ${330 + y}" fill="none" stroke="${c}" stroke-width="${[2, 1, 1, 1][k]}"/>`;
    });
    return out + `<g mask="url(#m-${id})">${lines[0]}${lines[3]}${lines[1]}${lines[2]}</g>`;
}

function oilModel() {
    let out = rect(83, 226, 36, 15, '#e6e6e6') + rect(121, 226, 394, 15, '#e6e6e6') + text(92, 238, 'len');
    for (let k = 0; k < 8; k++) {
        let x = Math.round(121 + k * 49.200);
        if (k % 2 == 0 && k != 0) out += rect(x - 1, 226, 1, 15, '#fff');
        if ([0, 2, 4, 6].includes(k)) out += rect(x + 1, 227, 47, 13, '#fff');
        out += text(x + 1, 238, k * 400);
    }
    out += rect(120, 259, 370, 152, '#ffeed0') + rect(120, 411, 370, 1, '#000') + rect(120, 412, 370, 50, '#804080');
    out += rect(154, 394, 339, 6, '#000') + text(130, 271, '1');
    out += '<path d="M110 238.500h20l-10 18z" fill="#808080" stroke="#000"/>';
    return out;
}

// spot of the source, with its callout
function snapshot() {
    let out = rect(120, 412, 369, 1, '#000');
    out += '<ellipse cx="126" cy="263" rx="6" ry="2" fill="#f66" opacity=".3"/>' + rect(120, 259, 3, 2, '#22f');
    out += '<rect x="117.500" y="209.500" width="6" height="6" fill="#e00000" stroke="#000"/>';
    out += '<path class="smooth" d="M131.500 165.500h55v24h-45l-20 21 10-21z" fill="#ffffc8" stroke="#505050"/>';
    return out + text(134, 181, 'x=0,y=0');
}

document.querySelectorAll('.panel').forEach(v => {
    let id = v.dataset.panel;
    let p = panels[id];
    let body = colorBar(p, id);
    if (p.tint) body += rect(120, 259, 370, 203, '#fcfdff');
    if (p.x) body += geometry(p);
    body += depthScale(p);
    if (p.wave) body += wave(p, id);
    if (id == 'oil') body += oilModel();
    body += rect(83, 257, 444, 2, '#000');
    if (id == 'snap') body += snapshot();
    v.innerHTML = `<h3>${p.title}</h3><svg viewBox="83 146 444 315" preserveAspectRatio="xMinYMin slice">${body}</svg>`;
});
```
